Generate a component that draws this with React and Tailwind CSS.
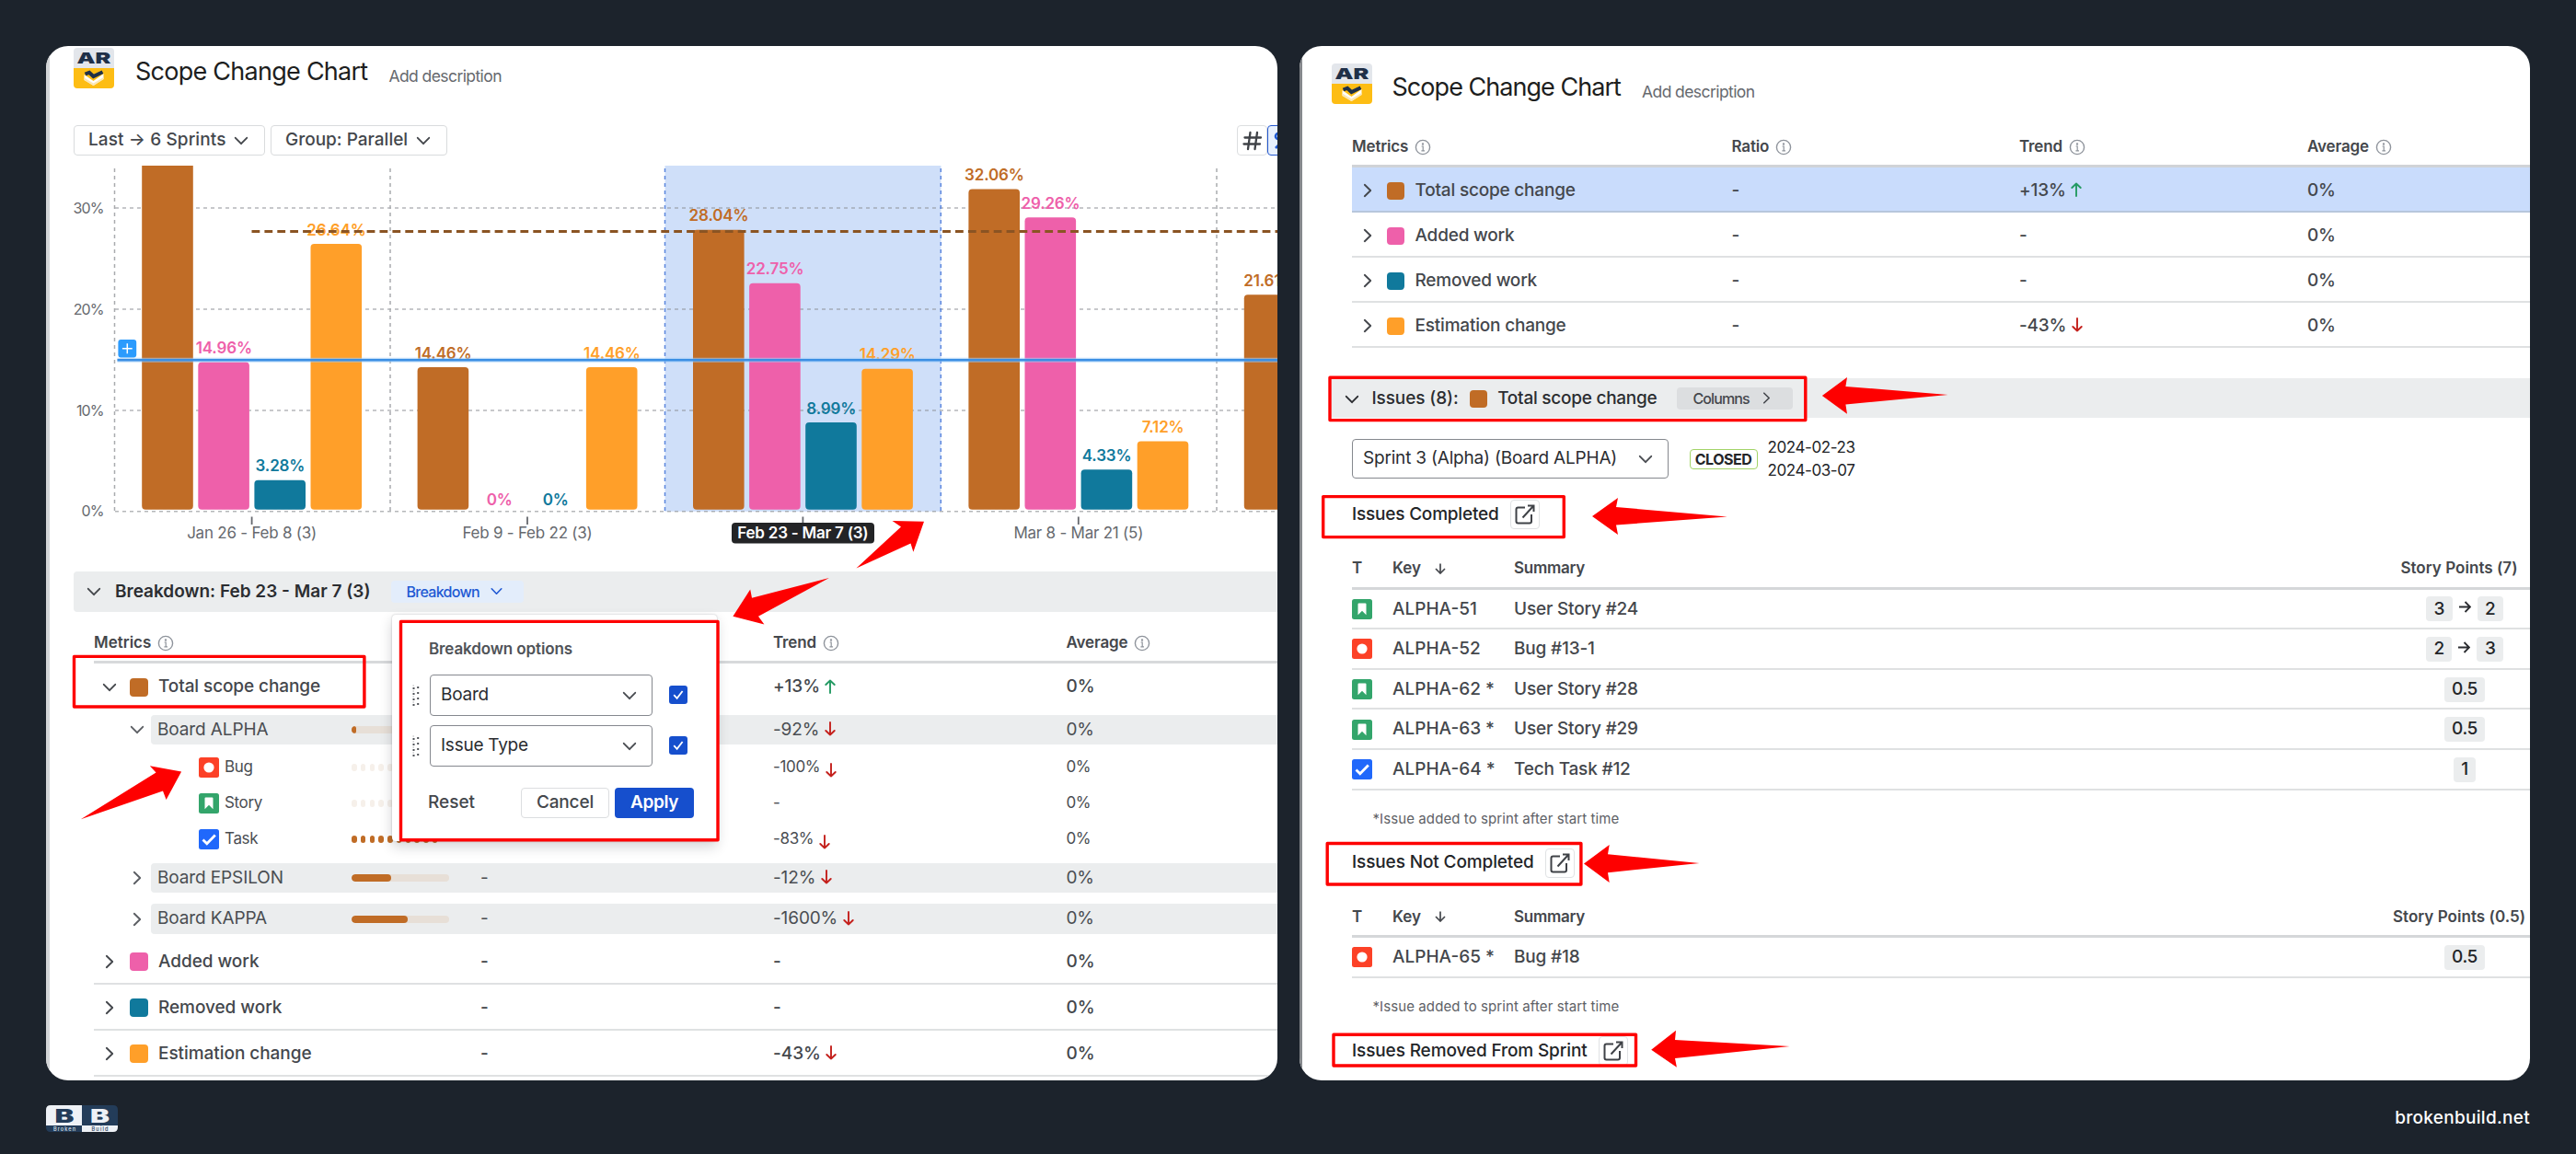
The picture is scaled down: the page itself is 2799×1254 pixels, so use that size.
const COLORS = { total: '#c06c26', added: '#ee60aa', removed: '#10799c', estimation: '#ff9f29' }
const BAR_COLORS = [COLORS.total, COLORS.added, COLORS.removed, COLORS.estimation]

const groups = [
  { label: 'Jan 26 - Feb 8 (3)', values: [36, 14.96, 3.28, 26.64] },
  { label: 'Feb 9 - Feb 22 (3)', values: [14.46, 0, 0, 14.46] },
  { label: 'Feb 23 - Mar 7 (3)', values: [28.04, 22.75, 8.99, 14.29], selected: true },
  { label: 'Mar 8 - Mar 21 (5)', values: [32.06, 29.26, 4.33, 7.12] },
  { label: '', values: [21.61] },
]

const metrics = [
  { name: 'Total scope change', color: 'bg-[#c06c26]', trend: '+13%', selected: true },
  { name: 'Added work', color: 'bg-[#ee60aa]', trend: '-' },
  { name: 'Removed work', color: 'bg-[#10799c]', trend: '-' },
  { name: 'Estimation change', color: 'bg-[#ff9f29]', trend: '-43%' },
]

const completed = [
  { type: 'story', id: 'ALPHA-51', summary: 'User Story #24', points: ['3', '2'] },
  { type: 'bug', id: 'ALPHA-52', summary: 'Bug #13-1', points: ['2', '3'] },
  { type: 'story', id: 'ALPHA-62 *', summary: 'User Story #28', points: ['0.5'] },
  { type: 'story', id: 'ALPHA-63 *', summary: 'User Story #29', points: ['0.5'] },
  { type: 'task', id: 'ALPHA-64 *', summary: 'Tech Task #12', points: ['1'] },
]
const notCompleted = [{ type: 'bug', id: 'ALPHA-65 *', summary: 'Bug #18', points: ['0.5'] }]

function Chevron({ right, className = '' }) {
  return (
    <svg viewBox="0 0 20 20" className={`h-5 w-5 shrink-0 ${className}`} fill="none" stroke="currentColor" strokeWidth="1.9" strokeLinecap="round" strokeLinejoin="round">
      <path d={right ? 'M6.8 3.8L13.2 10L6.8 16.2' : 'M3.8 6.8L10 13.2L16.2 6.8'} />
    </svg>
  )
}

function AppLogo() {
  return (
    <svg viewBox="0 0 44 44" className="mt-0.5 h-11 w-11 shrink-0">
      <path d="M4 0H40Q44 0 44 4V22H0V4Q0 0 4 0Z" fill="#e3e6eb" />
      <path d="M0 22H44V40Q44 44 40 44H4Q0 44 0 40Z" fill="#fdbd14" />
      <text x="3.5" y="17.2" fontSize="16.5" fontWeight="900" fill="#1f3048" textLength="37" lengthAdjust="spacingAndGlyphs">AR</text>
      <path d="M11.5 29L21.5 36L32.5 28V34L21.5 41L11.5 35Z" fill="#fff" />
      <path d="M11.5 35L21.5 41L32.5 34V32L21.5 38.5L11.5 32.5Z" fill="#fbe7b4" />
      <path d="M12.5 28.5L17 26.8L21.5 31L31.5 26.3" fill="none" stroke="#1f3048" strokeWidth="4" />
    </svg>
  )
}

function BrandLogo() {
  return (
    <svg viewBox="0 0 78 29" className="h-[29px] w-[78px]">
      <path d="M5 0H39V22H0V5Q0 0 5 0Z" fill="#eef1f6" />
      <path d="M39 0H73Q78 0 78 5V22H39Z" fill="#233c59" />
      <path d="M0 22H39V29H5Q0 29 0 24Z" fill="#233c59" />
      <path d="M39 22H78V24Q78 29 73 29H39Z" fill="#eef1f6" />
      <text x="9.5" y="18.8" fontSize="20" fontWeight="900" fill="#233c59" textLength="21" lengthAdjust="spacingAndGlyphs">B</text>
      <text x="48" y="18.8" fontSize="20" fontWeight="900" fill="#eef1f6" textLength="21" lengthAdjust="spacingAndGlyphs">B</text>
      <text x="8" y="27.5" fontSize="5.6" fontWeight="500" fill="#dbe2ec" textLength="24">Broken</text>
      <text x="49.5" y="27.5" fontSize="5.6" fontWeight="500" fill="#233c59" textLength="18">Build</text>
    </svg>
  )
}

function InfoIcon() {
  return (
    <svg viewBox="0 0 18 18" className="h-[18px] w-[18px]" fill="none" stroke="#8f949c" strokeWidth="1.4">
      <circle cx="9" cy="9" r="7.6" />
      <path d="M7.6 8H9.2V12.8M7.4 12.8H11" strokeWidth="1.2" />
      <circle cx="9" cy="5.5" r="0.5" fill="#8f949c" />
    </svg>
  )
}

function TrendArrow({ up, className = '' }) {
  return (
    <svg viewBox="0 0 12 16" className={`ml-[5.5px] h-4 w-3 ${className}`} fill="none" stroke={up ? '#249a63' : '#c4201c'} strokeWidth="1.9" strokeLinecap="round" strokeLinejoin="round">
      <path d={up ? 'M6 15V1.5M1.3 6L6 1.5L10.7 6' : 'M6 1V14.5M1.3 10L6 14.5L10.7 10'} />
    </svg>
  )
}

function SortArrow() {
  return (
    <svg viewBox="0 0 12 12" className="h-3 w-3" fill="none" stroke="#44474c" strokeWidth="1.7">
      <path d="M6 0.5V11M1 6L6 11L11 6" />
    </svg>
  )
}

function IssueIcon({ type }) {
  return (
    <svg viewBox="0 0 22 22" className="h-[22px] w-[22px] shrink-0">
      {type === 'bug' && (
        <>
          <rect width="22" height="22" rx="2.5" fill="#fc4127" />
          <circle cx="11" cy="11" r="5.6" fill="#fff" />
        </>
      )}
      {type === 'story' && (
        <>
          <rect width="22" height="22" rx="2.5" fill="#33a56b" />
          <path d="M6.5 5.5Q6.5 4.5 7.5 4.5H14.5Q15.5 4.5 15.5 5.5V17.2L11 12.8L6.5 17.2Z" fill="#fff" />
        </>
      )}
      {type === 'task' && (
        <>
          <rect width="22" height="22" rx="2.5" fill="#2068fb" />
          <path d="M4.5 11.6L8.8 15.8L17.8 6.6" fill="none" stroke="#fff" strokeWidth="2.8" />
        </>
      )}
    </svg>
  )
}

function ExternalButton() {
  return (
    <div className="flex h-8 w-8 items-center justify-center rounded border border-[#e0e2e4]">
      <svg viewBox="0 0 22 22" className="h-[22px] w-[22px]" fill="none" stroke="#3f4247" strokeWidth="2">
        <path d="M11 3.5H3.5Q1.5 3.5 1.5 5.5V18.5Q1.5 20.5 3.5 20.5H16Q18 20.5 18 18.5V11M14 1.5H20.5V8M20 2L8.5 14.5" />
      </svg>
    </div>
  )
}

function PanelHeader({ titleClass }) {
  return (
    <div className="flex h-14 shrink-0">
      <AppLogo />
      <h1 className={`flex items-center whitespace-nowrap text-[27px] text-[#1d1e20] ${titleClass}`}>Scope Change Chart</h1>
      <span className="ml-[23px] flex items-center pt-[11px] text-[17.5px] tracking-[-0.58px] text-[#66696e]">Add description</span>
    </div>
  )
}

function HeaderCell({ children, className = '' }) {
  return (
    <div className={`flex shrink-0 items-center gap-[7px] text-[17px] font-semibold tracking-[-0.15px] text-[#44474c] ${className}`}>
      {children}
      <InfoIcon />
    </div>
  )
}

function Trend({ value, small }) {
  return (
    <>
      {value}
      {value !== '-' && <TrendArrow up={value[0] === '+'} className={small ? 'mt-1.5' : '-mt-0.5'} />}
    </>
  )
}

const yOf = v => 557.8 - v * 10.99

function Chart() {
  return (
    <svg viewBox="50 180 1338 441" className="mt-[11px] h-[441px] w-[1338px] shrink-0">
      <rect x="722.5" y="180" width="300" height="375.8" fill="#cfdff9" />
      {[0, 10, 20, 30].map(v => (
        <g key={v}>
          <line x1="125" x2="1388" y1={yOf(v) - 2} y2={yOf(v) - 2} stroke="#8d9095" strokeOpacity="0.65" strokeWidth="1.5" strokeDasharray="4 4" />
          <text x="112.5" y={yOf(v) + 3.6} textAnchor="end" fontSize="16" letterSpacing="-0.9" fill="#66696e">{`${v}%`}</text>
        </g>
      ))}
      {[124.5, 424, 722.5, 1022.3, 1322].map(x => (
        <line key={x} x1={x} x2={x} y1="183" y2="556" stroke={x > 700 && x < 1100 ? '#5b86dd' : '#a9abae'} strokeWidth="1.5" strokeDasharray="4 4" />
      ))}
      {groups.map((g, gi) => {
        const left = 124.4 + gi * 299.4
        return (
          <g key={gi}>
            {g.values.map((v, i) => {
              const x = left + 29.8 + i * 61.1
              return (
                <g key={i}>
                  {v > 0 && <rect x={x} y={yOf(v)} width="55.6" height={553.8 - yOf(v)} rx="4" fill={BAR_COLORS[i]} />}
                  {v < 36 && (
                    <text x={x + 28} y={yOf(v) - 9.3} textAnchor="middle" fontSize="17" fontWeight="600" letterSpacing="-0.15" fill={BAR_COLORS[i]}>{`${v}%`}</text>
                  )}
                </g>
              )
            })}
            {g.label && <line x1={left + 149.2} x2={left + 149.2} y1="561.5" y2="570" stroke="#66696e" strokeWidth="1.8" />}
            {g.selected && <rect x={left + 71.8} y="568" width="155" height="22.5" rx="4" fill="#232426" />}
            <text x={left + 149.2} y="584.5" textAnchor="middle" fontSize="17" fontWeight={g.selected ? 600 : 400} letterSpacing="-0.23" fill={g.selected ? '#fff' : '#66696e'}>{g.label}</text>
          </g>
        )
      })}
      <line x1="273.5" x2="1388" y1="251.5" y2="251.5" stroke="#8a5423" strokeWidth="3" strokeDasharray="8.8 5.1" />
      <line x1="127.5" x2="1388" y1="391.2" y2="391.2" stroke="#9fcbf7" strokeOpacity="0.6" strokeWidth="5" />
      <line x1="127.5" x2="1388" y1="391.2" y2="391.2" stroke="#3b8fe4" strokeWidth="2.4" />
      <rect x="128.4" y="369" width="19.8" height="19.5" rx="3" fill="#2b9bfd" />
      <path d="M138.3 373.3V384.2M132.9 378.7H143.7" stroke="#fff" strokeWidth="1.5" />
    </svg>
  )
}

// Either a solid ratio bar or a dotted one for the nested issue types
function RatioBar({ width, dotted, filled }) {
  if (dotted) {
    return (
      <div className="flex gap-[4.25px]">
        {Array.from({ length: 10 }, (_, i) => (
          <i key={i} className={`h-2 w-[5.5px] rounded-full ${filled ? 'bg-[#c06c26]' : 'bg-[#f6f0ea]'}`} />
        ))}
      </div>
    )
  }
  return (
    <div className="h-2 w-[106px] overflow-hidden rounded-full bg-[#e7dfd7]">
      <div className="h-2 rounded-full bg-[#c06c26]" style={{ width }} />
    </div>
  )
}

function Values({ bar, ratio, trend, small }) {
  return (
    <>
      <div className="w-[140px] shrink-0">{bar}</div>
      <div className="w-[318px] shrink-0">{ratio}</div>
      <div className="flex w-[318.5px] shrink-0 items-center"><Trend value={trend} small={small} /></div>
      <div>0%</div>
    </>
  )
}

function BoardRow({ name, open, width, ratio, trend, className }) {
  return (
    <div className={`ml-[90px] flex shrink-0 text-[19px] tracking-[-0.12px] text-[#4a4d52] ${className}`}>
      <div className="flex w-6 shrink-0 items-center"><Chevron right={!open} className="-ml-px text-[#5b5e63]" /></div>
      <div className="flex flex-1 items-center rounded-l bg-[#ebedee] pl-[7px]">
        <div className="w-[211px] shrink-0">{name}</div>
        <Values bar={<RatioBar width={width} />} ratio={ratio} trend={trend} />
      </div>
    </div>
  )
}

function TypeRow({ type, name, trend, filled }) {
  return (
    <div className="ml-[166px] flex h-[39px] shrink-0 items-center text-[17px] tracking-[-0.35px] text-[#4a4d52]">
      <div className="flex w-[166px] shrink-0 items-center gap-1.5"><IssueIcon type={type} />{name}</div>
      <Values bar={<RatioBar dotted filled={filled} />} trend={trend} small />
    </div>
  )
}

function Select({ children, className }) {
  return (
    <div className={`flex shrink-0 items-center justify-between whitespace-nowrap rounded border border-[#85888e] bg-white pl-[11px] text-[19px] text-[#2b2d31] ${className}`}>
      {children}
      <Chevron className="mr-3.5 text-[#4a4d52]" />
    </div>
  )
}

function OptionRow({ label }) {
  return (
    <div className="flex h-[45px] items-center">
      <svg viewBox="0 0 8 24" className="h-6 w-2" fill="#505358">
        {[2, 8, 14, 20].map(y => (
          <g key={y}>
            <rect x="0.5" y={y + 1} width="2" height="2" />
            <rect x="5.2" y={y} width="2" height="2" />
            <rect x="0.5" y={y - 1.6} width="1.4" height="1.2" opacity="0.4" />
          </g>
        ))}
      </svg>
      <Select className="ml-[11px] h-[45px] w-[242px] tracking-[-0.25px]">{label}</Select>
      <div className="mb-px ml-[18px] flex h-5 w-5 items-center justify-center rounded-[3px] bg-[#164fcd]">
        <svg viewBox="0 0 14 14" className="h-3.5 w-3.5" fill="none" stroke="#fff" strokeWidth="1.8">
          <path d="M2.2 7.2L5.6 10.8L11.6 3" />
        </svg>
      </div>
    </div>
  )
}

function BreakdownPopup() {
  return (
    <div className="absolute left-[376px] top-[618px] h-[246px] w-[353px] rounded bg-white pl-[22px] shadow-[0_6px_14px_rgba(30,35,45,0.2),0_0_2px_rgba(30,35,45,0.3)]">
      <div className="mt-[26px] flex h-6 items-center pl-[18px] text-[17px] font-semibold tracking-[-0.12px] text-[#505358]">Breakdown options</div>
      <div className="mt-[15px] flex flex-col gap-2.5">
        <OptionRow label="Board" />
        <OptionRow label="Issue Type" />
      </div>
      <div className="mt-[23px] flex h-[33px] items-center pl-[17px] text-[19px] font-medium text-[#44474c]">
        Reset
        <div className="ml-auto flex h-[33px] w-[96px] items-center justify-center rounded border border-[#dcdee0] tracking-[-0.18px]">Cancel</div>
        <div className="ml-1.5 mr-[25px] flex h-[33px] w-[86px] items-center justify-center rounded bg-[#164fcd] font-semibold tracking-[-0.37px] text-white">Apply</div>
      </div>
    </div>
  )
}

function BreakdownPanel() {
  return (
    <section className="relative flex h-[1124px] w-[1338px] shrink-0 flex-col overflow-hidden rounded-3xl bg-white">
      <div className="absolute inset-y-0 left-0 w-1 bg-[#d3d5d7]" />
      <div className="pl-[30px]"><PanelHeader titleClass="ml-[23px] tracking-[-0.74px]" /></div>
      <div className="ml-[30px] mt-[30px] flex h-[33px] shrink-0 text-[19px] font-medium text-[#44474c]">
        <div className="flex w-[208px] shrink-0 items-center gap-[7px] rounded border border-[#d9dbdd] pl-[15px] tracking-[0.1px]">
          Last → 6 Sprints
          <Chevron />
        </div>
        <div className="ml-1.5 flex w-[192px] shrink-0 items-center gap-[7px] rounded border border-[#d9dbdd] pl-[15px]">
          Group: Parallel
          <Chevron />
        </div>
        <div className="ml-[858px] flex w-[33px] shrink-0 items-center justify-center rounded border border-[#dcdee0]">
          <svg viewBox="0 0 22 22" className="h-[22px] w-[22px]" fill="none" stroke="#3f4247" strokeWidth="2.3" strokeLinecap="round">
            <path d="M8.5 2L6 20M16 2L13.5 20M2.5 7.5H20M1.5 14.5H19" />
          </svg>
        </div>
        <div className="flex w-[33px] shrink-0 items-center rounded border-[1.5px] border-[#2458cf] bg-[#e7f0fd] pl-1.5">
          <svg viewBox="0 0 20 20" className="h-5 w-5" fill="none" stroke="#1f5ad2" strokeWidth="2.6">
            <circle cx="5" cy="5" r="3" />
            <path d="M2 18L17 2" />
          </svg>
        </div>
      </div>

      <Chart />

      <div className="ml-[30px] flex h-[44px] shrink-0 items-center rounded-l-sm bg-[#ebedee] pl-3">
        <Chevron className="text-[#44474c]" />
        <span className="ml-[13px] text-[19px] font-semibold text-[#2b2d31]">Breakdown: Feb 23 - Mar 7 (3)</span>
        <div className="-mt-px ml-[23px] flex h-6 w-[144px] items-center gap-2.5 rounded bg-[#e3edfb] pl-4 text-[16px] font-medium tracking-[-0.7px] text-[#2159d3]">
          Breakdown
          <Chevron className="h-[17px] w-[17px]" />
        </div>
      </div>

      <div className="ml-[52px] flex h-14 shrink-0 border-b-[3px] border-[#d7d9db] pt-[15px]">
        <HeaderCell className="w-[738px] tracking-normal">Metrics</HeaderCell>
        <HeaderCell className="w-[318.5px]">Trend</HeaderCell>
        <HeaderCell>Average</HeaderCell>
      </div>
      <div className="mb-[5px] ml-[52px] flex h-[51px] shrink-0 items-center text-[19px] font-medium tracking-[-0.1px] text-[#44474c]">
        <div className="flex w-[280px] shrink-0 items-center">
          <Chevron className="ml-[7px]" />
          <i className="ml-3 h-5 w-5 rounded bg-[#c06c26]" />
          <span className="ml-[11px]">Total scope change</span>
        </div>
        <Values trend="+13%" />
      </div>
      <BoardRow name="Board ALPHA" open width={5} trend="-92%" className="h-8" />
      <div className="mb-[7px] mt-[5px]">
        <TypeRow type="bug" name="Bug" trend="-100%" />
        <TypeRow type="story" name="Story" trend="-" />
        <TypeRow type="task" name="Task" trend="-83%" filled />
      </div>
      <BoardRow name="Board EPSILON" width={42.5} ratio="-" trend="-12%" className="h-8" />
      <BoardRow name="Board KAPPA" width={60.5} ratio="-" trend="-1600%" className="mt-3 h-[33px]" />
      <div className="mt-[5px]">
        {metrics.slice(1).map(m => (
          <div key={m.name} className="ml-[52px] flex h-[50px] items-center border-b-2 border-[#dfe1e2] pt-0.5 text-[19px] font-medium tracking-[-0.05px] text-[#44474c]">
            <div className="flex w-[280px] shrink-0 items-center">
              <Chevron right className="ml-[7px]" />
              <i className={`ml-3 h-5 w-5 rounded ${m.color}`} />
              <span className="ml-[11px]">{m.name}</span>
            </div>
            <Values ratio="-" trend={m.trend} />
          </div>
        ))}
      </div>
      <BreakdownPopup />
    </section>
  )
}

function Pill({ children }) {
  return <span className="flex h-[27px] items-center rounded bg-[#ebedee] px-[8.5px] text-[19px] font-medium tracking-[-0.4px] text-[#232528]">{children}</span>
}

function IssueTable({ total, issues }) {
  return (
    <div className="ml-[57px] shrink-0 text-[#44474c]">
      <div className="flex h-[42.6px] items-center border-b-[3px] border-[#d5d7d9] text-[17px] font-semibold">
        <div className="w-11">T</div>
        <div className="flex w-[132px] items-center gap-[15px]">Key<SortArrow /></div>
        <div className="flex-1 tracking-[-0.27px]">Summary</div>
        <div className="w-[154px] whitespace-nowrap text-center tracking-[0.04px]">Story Points ({total})</div>
      </div>
      {issues.map(issue => (
        <div key={issue.id} className="flex h-[43.6px] items-center border-b-2 border-[#dfe1e2] pt-px text-[19px] font-medium">
          <div className="w-11"><IssueIcon type={issue.type} /></div>
          <div className="w-[132px]">{issue.id}</div>
          <div className="flex-1 tracking-[-0.18px]">{issue.summary}</div>
          <div className="flex w-[154px] items-center justify-center pl-3">
            <Pill>{issue.points[0]}</Pill>
            {issue.points[1] && (
              <>
                <svg viewBox="0 0 13 13" className="mx-[7px] mb-1 h-[13px] w-[13px]" fill="none" stroke="#2b2d31" strokeWidth="1.9">
                  <path d="M0 6.5H12M6.5 1L12 6.5L6.5 12" />
                </svg>
                <Pill>{issue.points[1]}</Pill>
              </>
            )}
          </div>
        </div>
      ))}
    </div>
  )
}

function SectionTitle({ children, className }) {
  return (
    <div className={`ml-[57px] flex h-8 shrink-0 items-center gap-3 text-[19px] font-medium text-[#232528] ${className}`}>
      {children}
      <ExternalButton />
    </div>
  )
}

function Footnote({ className }) {
  return <div className={`ml-[79.5px] flex h-6 shrink-0 items-center text-[15px] tracking-[0.09px] text-[#5e6166] ${className}`}>*Issue added to sprint after start time</div>
}

function IssuesPanel() {
  return (
    <section className="relative flex h-[1124px] w-[1337px] shrink-0 flex-col overflow-hidden rounded-3xl bg-white">
      <div className="absolute inset-y-0 left-0 w-[3px] bg-[#85888c]" />
      <div className="pl-[35px] pt-[17px]"><PanelHeader titleClass="ml-[21.5px] tracking-[-0.96px]" /></div>
      <div className="ml-[57px] mt-[18px] flex h-[41px] shrink-0 border-b-[3px] border-[#d0d3d7]">
        <HeaderCell className="w-[412.5px]">Metrics</HeaderCell>
        <HeaderCell className="w-[312.5px]">Ratio</HeaderCell>
        <HeaderCell className="w-[313px]">Trend</HeaderCell>
        <HeaderCell>Average</HeaderCell>
      </div>
      {metrics.map(m => (
        <div key={m.name} className={`ml-[57px] flex h-[49px] shrink-0 items-center border-b-2 pt-[3px] text-[19px] font-medium tracking-[-0.2px] text-[#44474c] ${m.selected ? 'border-[#b7c6dc] bg-[#c9dcfc]' : 'border-[#dfe1e2]'}`}>
          <div className="flex w-[412.5px] shrink-0 items-center">
            <Chevron right className="ml-[7px]" />
            <i className={`ml-[11px] h-[19px] w-[19px] rounded ${m.color}`} />
            <span className="ml-[11.5px]">{m.name}</span>
          </div>
          <div className="w-[312.5px]">-</div>
          <div className="flex w-[313px] items-center"><Trend value={m.trend} /></div>
          <div>0%</div>
        </div>
      ))}

      <div className="ml-[34px] mt-[33px] flex h-[43px] shrink-0 items-center bg-[#ebedee] pl-[13px] pt-0.5 text-[19px] font-medium text-[#2b2d31]">
        <Chevron />
        <span className="ml-[11.5px] tracking-[-0.1px]">Issues (8):</span>
        <i className="ml-3 h-[19px] w-[19px] rounded bg-[#c06c26]" />
        <span className="ml-[11.5px] tracking-[-0.25px]">Total scope change</span>
        <div className="-mt-0.5 ml-[22px] flex h-6 w-[126px] items-center gap-2.5 rounded bg-[#dcdee0] pl-[17px] text-[16px] tracking-[-0.9px] text-[#44474c]">
          Columns
          <Chevron right className="h-[17px] w-[17px]" />
        </div>
      </div>

      <div className="ml-[57px] mt-[23px] flex h-[43px] shrink-0 items-center">
        <Select className="h-[43px] w-[344px] tracking-[-0.19px]">Sprint 3 (Alpha) (Board ALPHA)</Select>
        <div className="ml-[22.5px] flex h-[22px] w-[74px] items-center justify-center rounded border-[1.5px] border-[#a3d468] text-[16px] font-bold tracking-[-0.48px] text-[#232528]">CLOSED</div>
        <div className="ml-[11px] text-[17px] leading-[24.7px] tracking-[-0.42px] text-[#232528]">
          <div>2024-02-23</div>
          <div>2024-03-07</div>
        </div>
      </div>

      <SectionTitle className="mt-[23px] tracking-[-0.2px]">Issues Completed</SectionTitle>
      <div className="mt-[23px]"><IssueTable total="7" issues={completed} /></div>
      <Footnote className="mt-[19.5px]" />
      <SectionTitle className="mt-[19.5px] tracking-[-0.12px]">Issues Not Completed</SectionTitle>
      <div className="mt-[23px]"><IssueTable total="0.5" issues={notCompleted} /></div>
      <Footnote className="mt-[19px]" />
      <SectionTitle className="mt-5 tracking-[-0.12px]">Issues Removed From Sprint</SectionTitle>
    </section>
  )
}

// Red call-outs drawn over both panels
const boxes = [
  [78.8, 712.2, 397.6, 770.2],
  [433.8, 674.2, 781.7, 914.9],
  [1443.3, 409, 1963.5, 458.8],
  [1436, 538.4, 1701, 585.8],
  [1440.5, 915.3, 1719.6, 963.2],
  [1447.3, 1123, 1779.2, 1160.2],
]
const arrows = [
  '1004,566.7 969.6,566 979,572.5 930.4,617.6 989.5,590.5 992.4,599.8',
  '796.4,669.7 815.2,640.6 817,649.8 900.9,628 824,669.7 830.4,678.5',
  '197.1,838.6 162.8,832.3 169.5,839.4 87.8,890.3 177,859.4 180.6,869',
  '1979.9,430 2007,410 2005.4,419.9 2116.5,429 2005.4,439.5 2007,449.7',
  '1730,560.9 1758,541 1756,551 1876.8,561.6 1756,570.4 1758,581',
  '1721,938.6 1748.7,918 1747,928.3 1846.4,938 1747,948.2 1748.7,959',
  '1794.2,1140.7 1821,1119.7 1820,1130 1944.6,1136.9 1820,1150 1821.9,1159.8',
]

function Annotations() {
  return (
    <svg viewBox="0 0 2799 1254" className="pointer-events-none absolute inset-0 h-[1254px] w-[2799px]">
      {boxes.map(([x1, y1, x2, y2]) => (
        <rect key={x1} x={x1 + 1.7} y={y1 + 1.2} width={x2 - x1 - 3.4} height={y2 - y1 - 3.4} fill="none" stroke="#fe0000" strokeWidth="3.4" strokeLinejoin="round" />
      ))}
      {arrows.map(points => <polygon key={points} points={points} fill="#fe0000" />)}
    </svg>
  )
}

export default function App() {
  return (
    <main className="relative h-[1254px] w-[2799px] overflow-hidden bg-[#1c232c] font-['Inter',sans-serif]">
      <div className="flex gap-6 pl-[50px] pt-[50px]">
        <BreakdownPanel />
        <IssuesPanel />
      </div>
      <footer className="mt-[27px] flex items-center justify-between pl-[50px] pr-[50px]">
        <BrandLogo />
        <span className="text-[19px] font-medium tracking-[0.3px] text-white">brokenbuild.net</span>
      </footer>
      <Annotations />
    </main>
  )
}
